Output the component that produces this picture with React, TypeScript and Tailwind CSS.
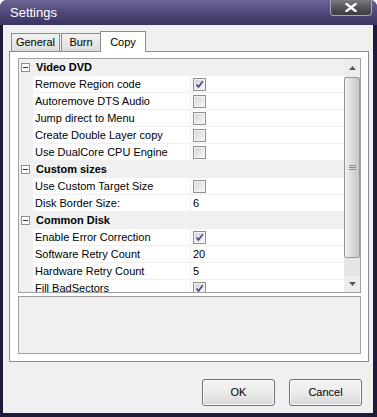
import React from "react";

type Row =
  | { kind: "cat"; label: string }
  | { kind: "prop"; label: string; check?: boolean; value?: string };

const rows: Row[] = [
  { kind: "cat", label: "Video DVD" },
  { kind: "prop", label: "Remove Region code", check: true },
  { kind: "prop", label: "Autoremove DTS Audio", check: false },
  { kind: "prop", label: "Jump direct to Menu", check: false },
  { kind: "prop", label: "Create Double Layer copy", check: false },
  { kind: "prop", label: "Use DualCore CPU Engine", check: false },
  { kind: "cat", label: "Custom sizes" },
  { kind: "prop", label: "Use Custom Target Size", check: false },
  { kind: "prop", label: "Disk Border Size:", value: "6" },
  { kind: "cat", label: "Common Disk" },
  { kind: "prop", label: "Enable Error Correction", check: true },
  { kind: "prop", label: "Software Retry Count", value: "20" },
  { kind: "prop", label: "Hardware Retry Count", value: "5" },
  { kind: "prop", label: "Fill BadSectors", check: true },
];

function CheckBox({ checked }: { checked: boolean }) {
  return (
    <div className="w-[13px] h-[13px] border border-[#8e8f8f] bg-[#f4f4f4] flex items-center justify-center">
      <div className="w-[9px] h-[9px] bg-gradient-to-br from-[#d6d6d6] to-[#f6f6f6] flex items-center justify-center">
        {checked && (
          <svg width="9" height="9" viewBox="0 0 9 9">
            <path d="M1.5 4.5 L3.5 7 L7.8 1.2" fill="none" stroke="#4b3f8c" strokeWidth="1.6" />
          </svg>
        )}
      </div>
    </div>
  );
}

function MinusBox() {
  return (
    <div className="w-[9px] h-[9px] border border-[#919191] bg-white flex items-center justify-center">
      <div className="w-[5px] h-[1px] bg-[#333]" />
    </div>
  );
}

function GridRow({ row }: { row: Row }) {
  if (row.kind === "cat") {
    return (
      <div className="h-[17px] shrink-0 flex items-center bg-[#f0f0f0]">
        <div className="ml-[2px] mr-[6px]">
          <MinusBox />
        </div>
        <span className="font-bold text-black">{row.label}</span>
      </div>
    );
  }
  return (
    <div className="h-[17px] shrink-0 flex">
      <div className="w-[14px] bg-[#f0f0f0]" />
      <div className="w-[157px] bg-white border-b border-[#f0f0f0] pl-[2px] flex items-center text-black whitespace-nowrap overflow-hidden">
        {row.label}
      </div>
      <div className="w-[1px] bg-[#f0f0f0]" />
      <div className="flex-1 bg-white border-b border-[#f0f0f0] pl-[2px] flex items-center text-black">
        {row.check !== undefined ? <CheckBox checked={row.check} /> : row.value}
      </div>
    </div>
  );
}

function ScrollBar() {
  return (
    <div className="w-[16px] shrink-0 flex flex-col bg-[#ececec]">
      <div className="h-[18px] flex items-center justify-center">
        <svg width="7" height="4" viewBox="0 0 7 4">
          <path d="M0 4 L3.5 0 L7 4 Z" fill="#5a5a5a" />
        </svg>
      </div>
      <div className="h-[181px] rounded-[2px] border border-[#989898] bg-gradient-to-r from-[#f2f2f2] via-[#dadada] to-[#c6c6c6] flex items-center justify-center">
        <div className="flex flex-col gap-[1px]">
          <div className="w-[7px] h-[1px] bg-[#8a8a8a]" />
          <div className="w-[7px] h-[1px] bg-[#8a8a8a]" />
          <div className="w-[7px] h-[1px] bg-[#8a8a8a]" />
        </div>
      </div>
      <div className="flex-1 bg-[#e6e6e6]" />
      <div className="h-[16px] flex items-center justify-center bg-[#ececec]">
        <svg width="7" height="4" viewBox="0 0 7 4">
          <path d="M0 0 L7 0 L3.5 4 Z" fill="#5a5a5a" />
        </svg>
      </div>
    </div>
  );
}

function Button({ label }: { label: string }) {
  return (
    <div className="w-[73px] h-[27px] rounded-[3px] border border-[#707070] bg-gradient-to-b from-[#f2f2f2] via-[#ebebeb] to-[#d6d6d6] shadow-[inset_0_0_0_1px_#fcfcfc] flex items-center justify-center text-black">
      {label}
    </div>
  );
}

export default function App() {
  return (
    <div className="w-[377px] h-[417px] flex flex-col bg-[#1f1b3b] rounded-t-[7px] overflow-hidden font-['Liberation_Sans',Arial,sans-serif] text-[11px] leading-none">
      {/* Title bar */}
      <div className="h-[25px] shrink-0 relative flex items-center pl-[10px] bg-gradient-to-b from-[#6c6596] via-[#4f4878] to-[#3a3462]">
        <span className="text-white text-[13px]">Settings</span>
        <div className="absolute right-[5px] top-0 w-[42px] h-[16px] rounded-b-[4px] border border-t-0 border-[#a9a7b6] bg-gradient-to-b from-[#7a7a82] via-[#55555c] to-[#3c3c42] flex items-center justify-center">
          <svg width="12" height="9" viewBox="0 0 12 9">
            <path d="M1.5 1 L10.5 8 M10.5 1 L1.5 8" stroke="#ffffff" strokeWidth="2.4" strokeLinecap="square" />
          </svg>
        </div>
      </div>

      {/* Client area */}
      <div className="flex-1 ml-[3px] mr-[4px] mb-[4px] bg-[#f0f0f0] flex flex-col pt-[6px]">
        {/* Tabs */}
        <div className="ml-[6px] h-[20px] flex items-end relative z-10">
          <div className="ml-[2px] w-[49px] h-[18px] border border-b-0 border-[#898c95] bg-gradient-to-b from-[#f3f3f3] to-[#dcdcdc] flex items-center justify-center text-black">
            General
          </div>
          <div className="ml-[1px] w-[40px] h-[18px] border border-b-0 border-[#898c95] bg-gradient-to-b from-[#f3f3f3] to-[#dcdcdc] flex items-center justify-center text-black">
            Burn
          </div>
          <div className="-ml-[1px] w-[46px] h-[21px] -mb-[1px] border border-b-0 border-[#898c95] bg-white flex items-start justify-center pt-[5px] text-black">
            Copy
          </div>
        </div>

        {/* Tab panel */}
        <div className="ml-[6px] w-[360px] h-[311px] border border-[#898c95] bg-white pt-[6px] pl-[8px] pr-[7px] flex flex-col">
          {/* Property grid */}
          <div className="w-[343px] h-[235px] border border-[#a0a0a0] flex overflow-hidden bg-white">
            <div className="flex-1 flex flex-col overflow-hidden">
              {rows.map((r, i) => (
                <GridRow key={i} row={r} />
              ))}
            </div>
            <ScrollBar />
          </div>
          {/* Description */}
          <div className="mt-[3px] w-[343px] h-[58px] border border-[#a0a0a0] bg-[#f0f0f0]" />
        </div>

        {/* Buttons */}
        <div className="mt-[17px] flex justify-end gap-[14px] pr-[11px]">
          <Button label="OK" />
          <Button label="Cancel" />
        </div>
      </div>
    </div>
  );
}
